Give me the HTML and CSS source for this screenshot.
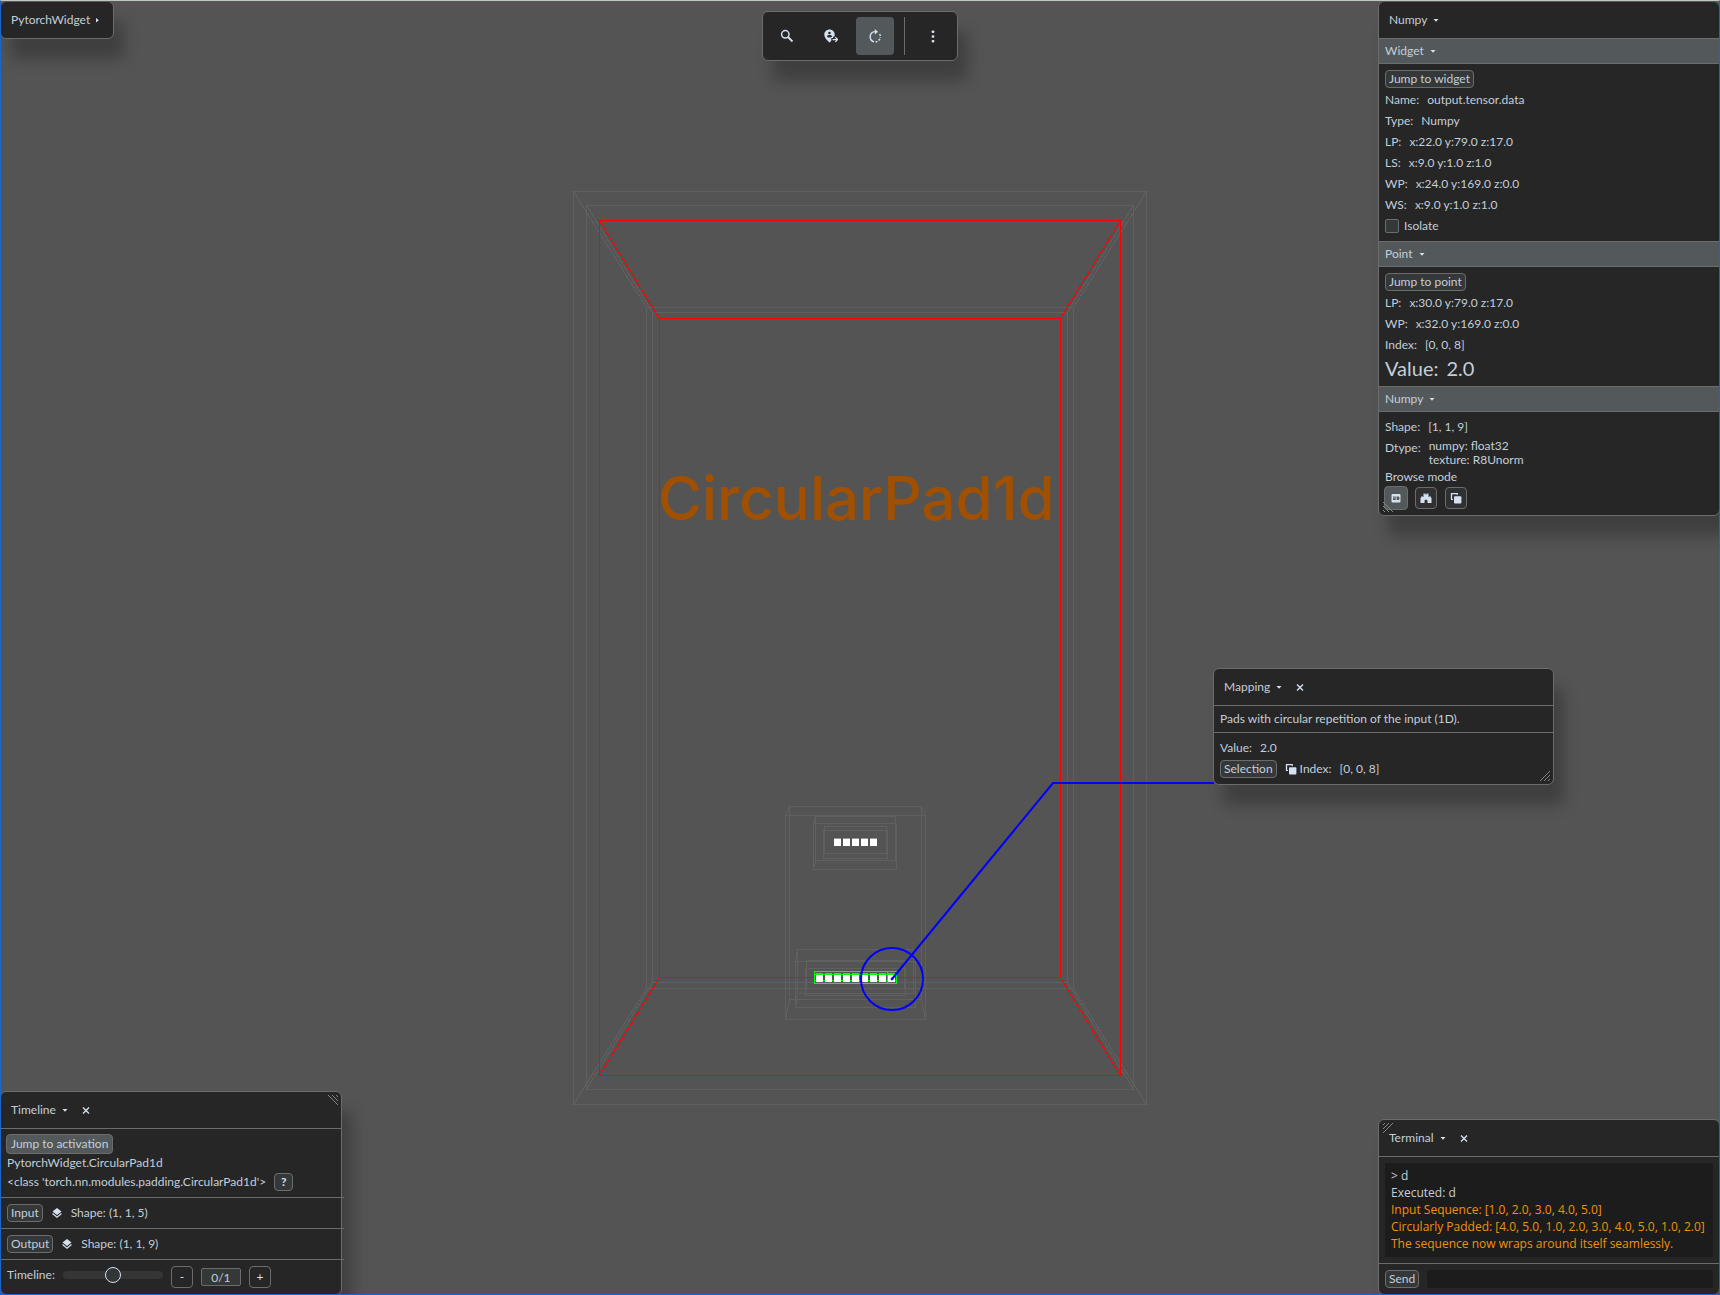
FILE: index.html
```html
<!DOCTYPE html>
<html lang="en">
<head>
<meta charset="utf-8">
<title>PytorchWidget</title>
<link rel="stylesheet" href="styles.css">
</head>
<body>
<svg class="defs" aria-hidden="true">
  <symbol id="caret-down" viewBox="0 0 6 6"><path d="M0.5 2h5L3 4.8z"/></symbol>
  <symbol id="caret-right" viewBox="0 0 6 6"><path d="M0 1v4.600L2.800 3.300z"/></symbol>
  <symbol id="close" viewBox="0 0 8 8"><path d="M1 1.500l6 6M7 1.500l-6 6" fill="none" stroke="currentColor" stroke-width="1.400"/></symbol>
  <symbol id="grip" viewBox="0 0 12 12"><path d="M1 11L11 1M5 11l6-6M9 11l2-2" fill="none" stroke="currentColor"/></symbol>
  <symbol id="copy" viewBox="0 0 12 12"><path d="M1.500 7.500V1.700h6.300" fill="none" stroke="currentColor" stroke-width="1.300"/><path d="M1 7.500h2M7.200 1.500v1.600" fill="none" stroke="currentColor"/><rect x="4" y="4.200" width="7.400" height="7.200" rx="1"/></symbol>
  <symbol id="layers" viewBox="0 0 12 12"><path d="M6 1L1.500 4.500 6 8l4.500-3.500z"/><path d="M1.500 6.600L6 10.200l4.500-3.600" fill="none" stroke="currentColor" stroke-width="1.300"/></symbol>
</svg>

<main class="desktop">
  <svg class="scene" viewBox="0 0 1720 1295" role="img" aria-label="CircularPad1d activation scene">
    <g class="wire" transform="translate(.5 .5)">
      <path d="M573 191H1146V1104H573zM646 307H1073V988H646zM573 191L646 307M1146 191L1073 307M573 1104L646 988M1146 1104L1073 988"/>
      <path d="M586 205H1133V1089H586zM652 312H1067V982H652zM586 205L652 312M1133 205L1067 312M586 1089L652 982M1133 1089L1067 982"/>
      <path d="M785 815H925V1019H785zM789 806H921V999H789zM785 815L789 806M925 815L921 806M785 1019L789 999M925 1019L921 999"/>
      <path d="M813 823H896V869H813zM815 816H895V860H815zM813 823L815 816M813 869L815 860"/>
      <path d="M823 830H887V858H823zM824 826H886V853H824z"/>
      <path d="M795 961H915V1007H795zM797 949H913V993H797zM795 961L797 949M795 1007L797 993"/>
      <path d="M805 968H905V995H805zM806 960H904V988H806z"/>
    </g>
    <g class="wire wire-active" transform="translate(.5 .5)">
      <path d="M599 220H1120V1075H599zM659 318H1060V977H659zM599 220L659 318M1120 220L1060 318M599 1075L659 977M1120 1075L1060 977"/>
    </g>
    <text class="scene-label" x="658" y="520">CircularPad1d</text>
    <g class="cell-edges">
      <path d="M834 838.500h43" stroke-dasharray="7 2"/>
    </g>
    <g class="wire wire-selected" transform="translate(.5 .5)">
      <path d="M814 971H896V983H814zM814 974H896M814 980H896M887 971V983"/>
    </g>
    <g class="cell-edges">
      <path d="M816 973.500h79" stroke-dasharray="7 2"/>
    </g>
    <g class="cells">
      <path d="M834 842.500h43M816 978.500h79" stroke-dasharray="7 2"/>
    </g>
    <g class="pointer">
      <circle cx="892" cy="979" r="31"/>
      <path d="M892 979L1053 783H1214"/>
      <circle class="pointer-dot" cx="892" cy="979" r="1"/>
    </g>
  </svg>

  <section class="window window-root">
    <header class="titlebar">
      <button class="title" type="button">PytorchWidget <svg class="caret"><use href="#caret-right"/></svg></button>
    </header>
  </section>

  <nav class="toolbar" aria-label="Tools">
    <button class="tool" type="button" aria-label="Search">
      <svg viewBox="0 0 14 14"><circle cx="5.300" cy="5.300" r="3.700" fill="none" stroke="currentColor" stroke-width="1.500"/><path d="M8 8l4.500 4.500" stroke="currentColor" stroke-width="1.800"/></svg>
    </button>
    <button class="tool" type="button" aria-label="Move to location">
      <svg viewBox="0 0 14 14"><path fill-rule="evenodd" d="M5.500 0.500C2.600 0.500 0.300 2.800 0.300 5.500c0 3.300 3 6 5.200 8 .6-.5 1.200-1.100 1.800-1.700V8.900h1.900V7.400h1.300c.2-.6.200-1.200.2-1.900C10.700 2.800 8.400.500 5.500.500zM5.500 2.700a1.300 1.300 0 1 1 0 2.600 1.300 1.300 0 0 1 0-2.600zM2.800 7.300c.5-1 1.600-1.400 2.700-1.400s2.200.4 2.700 1.400c-.6.800-1.600 1.300-2.700 1.300s-2.100-.5-2.700-1.300z"/><path d="M8.600 10.600h4.800M11.300 8.300l2.300 2.300-2.300 2.300" fill="none" stroke="currentColor" stroke-width="1.300"/></svg>
    </button>
    <button class="tool tool-on" type="button" aria-label="Rotate" aria-pressed="true">
      <svg viewBox="0 0 14 14"><path d="M6 12.800A5.200 5.200 0 0 1 7 2.600h1.500" fill="none" stroke="currentColor" stroke-width="1.400"/><path d="M6.800 0L10 2.700 6.800 5.400z"/><path d="M7.500 12.900a5.200 5.200 0 0 0 4.800-4.900M12.300 7a5.200 5.200 0 0 0-1.600-3.100" fill="none" stroke="currentColor" stroke-width="1.400" stroke-dasharray="2 1.400"/></svg>
    </button>
    <span class="tool-divider"></span>
    <button class="tool" type="button" aria-label="More">
      <svg viewBox="0 0 14 14"><rect x="5.700" y="1.500" width="2.600" height="2.600" rx=".8"/><rect x="5.700" y="6.200" width="2.600" height="2.600" rx=".8"/><rect x="5.700" y="10.900" width="2.600" height="2.600" rx=".8"/></svg>
    </button>
  </nav>

  <section class="window window-inspector">
    <header class="titlebar">
      <button class="title" type="button">Numpy <svg class="caret"><use href="#caret-down"/></svg></button>
    </header>
    <button class="band" type="button">Widget <svg class="caret"><use href="#caret-down"/></svg></button>
    <div class="body">
      <div class="row"><button class="btn" type="button">Jump to widget</button></div>
      <div class="row"><span>Name:</span><span>output.tensor.data</span></div>
      <div class="row"><span>Type:</span><span>Numpy</span></div>
      <div class="row"><span>LP:</span><span>x:22.0 y:79.0 z:17.0</span></div>
      <div class="row"><span>LS:</span><span>x:9.0 y:1.0 z:1.0</span></div>
      <div class="row"><span>WP:</span><span>x:24.0 y:169.0 z:0.0</span></div>
      <div class="row"><span>WS:</span><span>x:9.0 y:1.0 z:1.0</span></div>
      <label class="row check"><input type="checkbox">Isolate</label>
    </div>
    <button class="band" type="button">Point <svg class="caret"><use href="#caret-down"/></svg></button>
    <div class="body">
      <div class="row"><button class="btn" type="button">Jump to point</button></div>
      <div class="row"><span>LP:</span><span>x:30.0 y:79.0 z:17.0</span></div>
      <div class="row"><span>WP:</span><span>x:32.0 y:169.0 z:0.0</span></div>
      <div class="row"><span>Index:</span><span>[0, 0, 8]</span></div>
      <div class="row row-large"><span>Value:</span><span>2.0</span></div>
    </div>
    <button class="band" type="button">Numpy <svg class="caret"><use href="#caret-down"/></svg></button>
    <div class="body">
      <div class="row"><span>Shape:</span><span>[1, 1, 9]</span></div>
      <div class="row row-multi"><span class="row-key">Dtype:</span><span>numpy: float32<br>texture: R8Unorm</span></div>
      <div class="line">Browse mode</div>
      <div class="modes">
        <button class="mode mode-on" type="button" aria-label="2D" aria-pressed="true"><svg viewBox="0 0 12 12"><path fill-rule="evenodd" d="M2.500 2h7q1 0 1 1v6.500q0 1-1 1h-7q-1 0-1-1V3q0-1 1-1zM3 4.500v1h1.600v.5H3V8h2.700V7H4v-.300h1.700V4.500zM6.600 4.500V8h2l.8-.8V5.300l-.8-.8z"/></svg></button>
        <button class="mode" type="button" aria-label="Castle"><svg viewBox="0 0 12 12"><path d="M.5 11V6l1-1V4h1v1h1V1.500h1.300v1h.7v-1h1v1h.700v-1h1.300V5h1V4h1v1l1 1v5H7.500V9a1.500 1.500 0 0 0-3 0v2z"/></svg></button>
        <button class="mode" type="button" aria-label="Layers"><svg viewBox="0 0 12 12"><use href="#copy"/></svg></button>
      </div>
    </div>
    <svg class="grip grip-bl"><use href="#grip"/></svg>
  </section>

  <section class="window window-mapping">
    <header class="titlebar">
      <button class="title" type="button">Mapping <svg class="caret"><use href="#caret-down"/></svg></button>
      <button class="close" type="button" aria-label="Close"><svg><use href="#close"/></svg></button>
    </header>
    <div class="body ruled"><div class="line">Pads with circular repetition of the input (1D).</div></div>
    <div class="body ruled">
      <div class="row"><span>Value:</span><span>2.0</span></div>
      <div class="row"><button class="btn" type="button">Selection</button><span class="tagged"><svg class="icon"><use href="#copy"/></svg>Index:</span><span>[0, 0, 8]</span></div>
    </div>
    <svg class="grip grip-br"><use href="#grip"/></svg>
  </section>

  <section class="window window-timeline">
    <header class="titlebar">
      <button class="title" type="button">Timeline <svg class="caret"><use href="#caret-down"/></svg></button>
      <button class="close" type="button" aria-label="Close"><svg><use href="#close"/></svg></button>
    </header>
    <div class="body ruled">
      <div class="row"><button class="btn btn-on" type="button">Jump to activation</button></div>
      <div class="line">PytorchWidget.CircularPad1d</div>
      <div class="row"><span>&lt;class 'torch.nn.modules.padding.CircularPad1d'&gt;</span><button class="btn btn-help" type="button" aria-label="Help">?</button></div>
    </div>
    <div class="body ruled ruled-wide">
      <div class="row"><button class="btn" type="button">Input</button><svg class="icon"><use href="#layers"/></svg><span>Shape: (1, 1, 5)</span></div>
    </div>
    <div class="body ruled ruled-wide">
      <div class="row"><button class="btn" type="button">Output</button><svg class="icon"><use href="#layers"/></svg><span>Shape: (1, 1, 9)</span></div>
    </div>
    <div class="body ruled ruled-wide">
      <div class="stepper">
        <label class="row" for="frame">Timeline:</label>
        <input class="slider" id="frame" type="range" min="0" max="2" value="1">
        <button class="mode" type="button">-</button>
        <input class="counter" type="text" value="0/1" aria-label="Frame">
        <button class="mode" type="button">+</button>
      </div>
    </div>
    <svg class="grip grip-tr"><use href="#grip"/></svg>
  </section>

  <section class="window window-terminal">
    <header class="titlebar">
      <button class="title" type="button">Terminal <svg class="caret"><use href="#caret-down"/></svg></button>
      <button class="close" type="button" aria-label="Close"><svg><use href="#close"/></svg></button>
    </header>
    <div class="body ruled">
      <div class="log">
        <p>&gt; d</p>
        <p>Executed: d</p>
        <p class="out">Input Sequence: [1.0, 2.0, 3.0, 4.0, 5.0]</p>
        <p class="out">Circularly Padded: [4.0, 5.0, 1.0, 2.0, 3.0, 4.0, 5.0, 1.0, 2.0]</p>
        <p class="out">The sequence now wraps around itself seamlessly.</p>
      </div>
    </div>
    <form class="body ruled">
      <div class="row"><button class="btn" type="button">Send</button><input class="prompt" type="text" aria-label="Command"></div>
    </form>
    <svg class="grip grip-tl"><use href="#grip"/></svg>
  </section>
</main>
</body>
</html>
```
FILE: styles.css
```css
:root {
  --text: #c3ced9;
  --icon: #d5e1ee;
  --panel: #262626;
  --line: #6c6c6c;
  --accent: #53595b;
  --control: #353839;
  --frame: #1a64cc;
}

* { box-sizing: border-box; }

html, body { height: 100%; }

body {
  margin: 0;
  background: #545454;
  color: var(--text);
  font: 12px/14px Lato, "Open Sans", sans-serif;
}

button, input {
  margin: 0;
  font: inherit;
  color: inherit;
}

button {
  padding: 0;
  border: 0;
  background: none;
}

p { margin: 0; }

svg { display: block; fill: currentColor; }

.defs { position: absolute; width: 0; height: 0; }

.desktop {
  position: relative;
  height: 100vh;
  overflow: hidden;
}

/* window-manager frame drawn over everything */
.desktop::after {
  content: "";
  position: absolute;
  inset: 0;
  border: 1px solid var(--frame);
  border-top-color: #c4c4c4;
  box-shadow: inset 0 1px var(--frame);
  pointer-events: none;
}

/* 3D scene */
.scene { width: 100%; height: 100%; }
.wire { fill: none; stroke: #606060; shape-rendering: crispEdges; }
.wire-active { stroke: #f00; }
.wire-selected { stroke: #0f0; }
.scene-label {
  font: 500 60px Inter, sans-serif;
  fill: #a05000;
}
.cell-edges { stroke: #999; }
.cells { stroke: #fff; stroke-width: 7; }
.pointer { fill: none; stroke: #00f; stroke-width: 2; }
.pointer-dot { fill: #00f; stroke-width: 1; }

/* floating windows */
.window, .toolbar {
  position: absolute;
  border: 1px solid var(--line);
  border-radius: 6px;
  background: var(--panel);
  box-shadow: 10px 20px 15px rgba(0, 0, 0, .25);
}
.window-root { left: 0; top: 1px; }
.window-inspector { right: 0; top: 1px; width: 342px; }
.window-mapping { left: calc(50% + 353px); top: 668px; width: 341px; }
.window-timeline { left: 0; bottom: 0; width: 342px; }
.window-terminal { right: 0; bottom: 0; width: 342px; }

.titlebar {
  display: flex;
  align-items: center;
  gap: 14px;
  height: 36px;
  padding: 0 11px 0 10px;
}
.title { display: flex; align-items: center; gap: 6px; }
.caret { width: 6px; height: 6px; color: var(--icon); }
.close svg { width: 8px; height: 8px; color: var(--icon); }

.band {
  display: flex;
  align-items: center;
  gap: 6px;
  width: 100%;
  height: 26px;
  padding: 0 6px;
  border: solid var(--line);
  border-width: 1px 0;
  background: var(--accent);
}

.body {
  display: flex;
  flex-direction: column;
  gap: 3px;
  padding: 6px;
}
.ruled { border-top: 1px solid var(--line); }
.ruled-wide { margin-right: -3px; }

.row {
  display: flex;
  align-items: center;
  gap: 8px;
  height: 18px;
  white-space: nowrap;
}
.row-large { height: 23px; font-size: 20px; line-height: 23px; }
.row-multi { height: auto; align-items: flex-start; }
.row-key { line-height: 18px; }

.btn {
  height: 18px;
  padding: 0 3px;
  border: 1px solid var(--line);
  border-radius: 4px;
  background: var(--control);
}
.btn-on { height: 20px; padding: 0 4px; margin: 0 -1px; background: var(--accent); }
.btn-help { width: 19px; font-weight: 700; color: var(--icon); }

.check { gap: 5px; }
.check input {
  appearance: none;
  width: 14px;
  height: 14px;
  border: 1px solid var(--line);
  border-radius: 2px;
  background: var(--control);
}

.icon { width: 12px; height: 12px; color: var(--icon); }
.tagged { display: flex; align-items: center; gap: 3px; }

.modes { display: flex; align-items: center; gap: 8px; height: 22px; }
.mode {
  display: grid;
  place-items: center;
  width: 22px;
  height: 22px;
  border: 1px solid var(--line);
  border-radius: 4px;
  color: var(--icon);
}
.modes .mode { background: #2e3031; }
.modes .mode-on { width: 24px; height: 24px; margin: 0 -1px; background: var(--accent); }
.mode svg { width: 12px; height: 12px; }

.stepper { display: flex; gap: 8px; }
.slider {
  appearance: none;
  width: 100px;
  height: 18px;
  background: none;
}
.slider::-webkit-slider-runnable-track {
  height: 8px;
  border-radius: 4px;
  background: #353535;
}
.slider::-webkit-slider-thumb {
  appearance: none;
  width: 16px;
  height: 16px;
  margin-top: -4px;
  border: 1px solid var(--icon);
  border-radius: 50%;
  background: #333637;
}
.counter {
  width: 40px;
  height: 18px;
  margin-top: 2px;
  padding: 0;
  border: 1px solid var(--line);
  border-radius: 2px;
  background: var(--control);
  text-align: center;
}

.log {
  padding: 4px 6px 5px;
  background: #1c1c1c;
  font-family: "Open Sans", sans-serif;
  line-height: 17px;
  white-space: nowrap;
}
.out { color: #f09208; }
.prompt {
  flex: 1;
  min-width: 0;
  height: 18px;
  padding: 0 4px;
  border: 0;
  border-radius: 2px;
  background: #1c1c1c;
}

.grip { position: absolute; width: 12px; height: 12px; color: #858585; }
.grip-br { right: 2px; bottom: 2px; }
.grip-bl { left: 3px; bottom: 2px; transform: scaleX(-1); }
.grip-tr { right: 2px; top: 2px; transform: scaleY(-1); }
.grip-tl { left: 3px; top: 2px; transform: scale(-1); }

/* toolbar */
.toolbar {
  left: 50%;
  top: 11px;
  transform: translateX(-50%);
  display: flex;
  gap: 6px;
  padding: 5px;
}
.tool {
  display: grid;
  place-items: center;
  width: 38px;
  height: 38px;
  border-radius: 4px;
  color: var(--icon);
}
.tool svg { width: 14px; height: 14px; }
.tool-on { background: var(--accent); }
.tool-divider { display: grid; justify-content: center; width: 8px; }
.tool-divider::before { content: ""; width: 1px; background: var(--line); }
```
